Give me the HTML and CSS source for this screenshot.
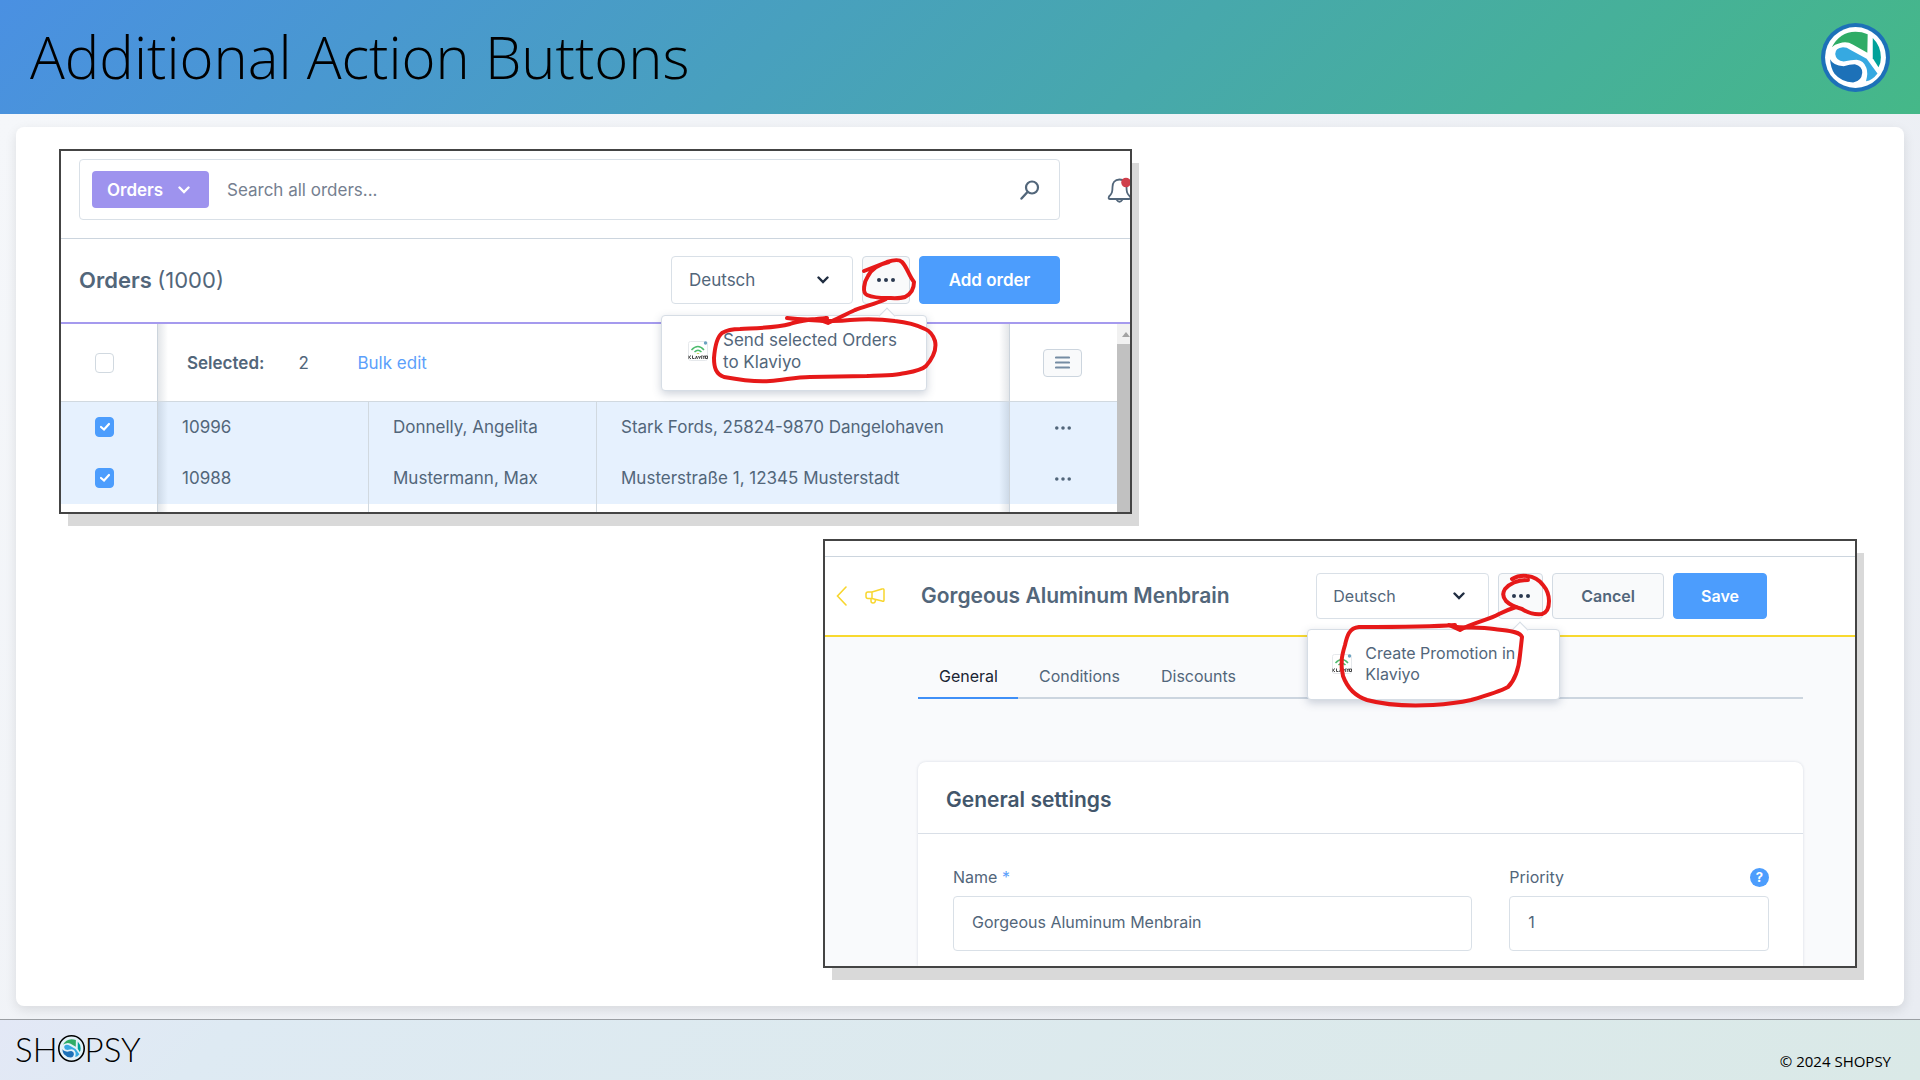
FILE: index.html
```html
<!DOCTYPE html>
<html lang="en">
<head>
<meta charset="utf-8">
<meta name="viewport" content="width=device-width, initial-scale=1">
<title>Additional Action Buttons</title>
<link rel="stylesheet" href="styles.css">
</head>
<body>
<svg class="defs" aria-hidden="true">
  <symbol id="mark" viewBox="0 0 204 204">
    <g transform="translate(-20 -18)">
      <path fill="#2fac66" d="M52 90Q75 45 122 44Q141 44 158 51L157 106L115 82Q95 70 75 78Q60 81 52 90Z"/>
      <path fill="#00a19a" d="M173 62Q197 85 197 120Q197 138 190 149L173 122Z"/>
      <path fill="#36a9e1" d="M62 110Q62 92 85 90Q97 90 105 96L155 124L187 167Q172 187 153 190Q160 165 154 150Q146 129 125 127Q110 127 87 132Q64 130 62 110Z"/>
      <path fill="#1d71b8" d="M47 125Q55 143 87 146Q105 140 120 140Q142 145 142 165Q140 190 115 194Q80 192 60 168Q48 150 47 125Z"/>
    </g>
  </symbol>
  <symbol id="chevron" viewBox="0 0 12 8">
    <path d="M1.500 1.500L6 6L10.500 1.500" fill="none" stroke="currentColor" stroke-width="2.400" stroke-linecap="round"/>
  </symbol>
  <symbol id="dots" viewBox="0 0 18 4">
    <circle cx="2" cy="2" r="2"/><circle cx="9" cy="2" r="2"/><circle cx="16" cy="2" r="2"/>
  </symbol>
  <symbol id="klaviyo" viewBox="0 0 20 20">
    <rect x=".5" y=".5" width="19" height="19" rx="2" fill="#fff" stroke="#e6e9ec"/>
    <path d="M3.500 9Q10 2 16 9M6.500 11Q10 7.500 13.500 11" fill="none" stroke="#4dbb6d" stroke-width="1.500"/>
    <path d="M8.500 13Q10 11 11.500 13Z" fill="#c5c93b"/>
    <circle cx="17.500" cy="2" r="1.700" fill="#6ba3c0"/>
    <path d="M0 14.500V18M3 14.500L1 16.200L3 18M4.500 14.500V17.500H6.500M7.500 18L8.500 15L9.500 18M10.500 15L11.500 17.500L12.500 15M13.700 14.500V18M14.800 14.500L15.800 16.200V18M16.800 14.500L15.800 16.200M17.500 15H19.500V17.500H17.500Z" fill="none" stroke="#333" stroke-width=".9"/>
  </symbol>
</svg>

<header class="title-bar">
  <h1>Additional Action Buttons</h1>
  <svg class="brand" viewBox="0 0 204 204" role="img" aria-label="Shopsy">
    <circle cx="102" cy="102" r="102" fill="#1d71b8"/>
    <circle cx="102" cy="102" r="90" fill="#fff"/>
    <use href="#mark"/>
  </svg>
</header>

<main class="stage">
  <div class="slide">
    <section class="shot shot-orders" aria-label="Orders">
      <div class="topbar">
        <div class="search">
          <button class="scope" type="button">Orders <svg class="chev"><use href="#chevron"/></svg></button>
          <input type="search" aria-label="Search" placeholder="Search all orders...">
          <svg class="lens" viewBox="0 0 20 20" aria-hidden="true"><circle cx="12" cy="7.500" r="6" fill="none" stroke="currentColor" stroke-width="2.200"/><path d="M7.500 12L1.500 18.500" stroke="currentColor" stroke-width="2.400" stroke-linecap="round"/></svg>
        </div>
        <div class="bell">
          <svg viewBox="0 0 26 26" aria-hidden="true"><path d="M12.500 2.500C7.500 2.500 5.500 6 5.500 10C5.500 15 5 16.500 2 19.500Q1 22 3 22H22Q24.500 22 23 19.500C20 16.500 19.500 15 19.500 10C19.500 6 17.500 2.500 12.500 2.500ZM9.500 22.500Q12.500 27 15.500 22.500" fill="none" stroke="#52667a" stroke-width="1.800"/><circle cx="19" cy="5.500" r="4.800" fill="#cf3f4b"/></svg>
        </div>
      </div>
      <div class="smartbar">
        <h2>Orders <span>(1000)</span></h2>
        <div class="actions">
          <div class="picker"><select aria-label="Language"><option>Deutsch</option></select><svg class="chev"><use href="#chevron"/></svg></div>
          <div class="more">
            <button class="btn btn-more" type="button" aria-label="More actions"><svg class="dots"><use href="#dots"/></svg></button>
            <div class="popover">
              <svg class="app"><use href="#klaviyo"/></svg>
              <a href="#orders">Send selected Orders to Klaviyo</a>
            </div>
            <svg class="ink" viewBox="700 250 250 140" aria-hidden="true">
              <path d="M864 271L887 262C893 260 899 259 902 262C907 267 909 276 914 282C914 289 911 294 905 297C899 299 892 298 887 298C880 298 872 297 867 295C862 293 864 282 868 276C872 268 880 264 889 262"/>
              <path d="M886 299C878 303 866 306 855 310C846 314 837 319 828 323L820 320"/>
              <path d="M787 318Q808 321 827 318C815 319 800 320 790 324C775 328 760 328 740 329C733 329 727 330 722 333C717 337 715 345 714 358C714 368 716 374 724 377C740 380 755 382 770 381C785 380 795 377 810 377L867 376C880 375 890 376 900 374C910 372 921 371 926 366C932 359 937 350 935 341C933 335 930 331 925 329C915 324 905 322 895 321C880 319 865 319 850 320C835 322 822 321 808 320"/>
            </svg>
          </div>
          <button class="btn btn-primary" type="button">Add order</button>
        </div>
      </div>
      <div class="grid-area">
        <table>
          <colgroup><col class="c-check"><col class="c-id"><col class="c-name"><col><col class="c-menu"></colgroup>
          <thead>
            <tr>
              <th class="check"><input type="checkbox" aria-label="Select all"></th>
              <th colspan="3" class="edge-left edge-right"><div class="bulk"><strong>Selected:</strong><span class="count">2</span><a href="#bulk">Bulk edit</a></div></th>
              <th class="menu"><button class="cols" type="button" aria-label="Columns"><svg viewBox="0 0 15 13"><path d="M1 1.500H14M1 6.500H14M1 11.500H14" stroke="currentColor" stroke-width="2.200" stroke-linecap="round"/></svg></button></th>
            </tr>
          </thead>
          <tbody>
            <tr class="picked">
              <td class="check"><input type="checkbox" checked aria-label="Order 10996"></td>
              <td class="edge-left line">10996</td><td class="line">Donnelly, Angelita</td><td class="edge-right">Stark Fords, 25824-9870 Dangelohaven</td>
              <td class="menu"><button class="row-menu" type="button" aria-label="Row actions"><svg class="dots"><use href="#dots"/></svg></button></td>
            </tr>
            <tr class="picked">
              <td class="check"><input type="checkbox" checked aria-label="Order 10988"></td>
              <td class="edge-left line">10988</td><td class="line">Mustermann, Max</td><td class="edge-right">Musterstraße 1, 12345 Musterstadt</td>
              <td class="menu"><button class="row-menu" type="button" aria-label="Row actions"><svg class="dots"><use href="#dots"/></svg></button></td>
            </tr>
            <tr class="rest"><td class="check"></td><td class="edge-left line"></td><td class="line"></td><td class="edge-right"></td><td class="menu"></td></tr>
          </tbody>
        </table>
        <div class="scrollbar" aria-hidden="true"><span class="up"></span><span class="thumb"></span></div>
      </div>
    </section>

    <section class="shot shot-promo" aria-label="Promotion">
      <div class="strip"></div>
      <div class="smartbar">
        <a class="back" href="#back" aria-label="Back"><svg viewBox="0 0 11 20"><path d="M10 1L1.500 10L10 19" fill="none" stroke="currentColor" stroke-width="1.600" stroke-linecap="round"/></svg></a>
        <svg class="horn" viewBox="0 0 20 16" aria-hidden="true"><path d="M7 4L17 1Q19 .5 19 2V12Q19 14 17 13L7 10.500H3Q1 10.500 1 8.500V6Q1 4 3 4ZM7 4V10.500M6 10.500V13Q6 15 8 15Q10.500 15 10.500 11.500" fill="none" stroke="currentColor" stroke-width="1.500"/></svg>
        <h2>Gorgeous Aluminum Menbrain</h2>
        <div class="actions">
          <div class="picker"><select aria-label="Language"><option>Deutsch</option></select><svg class="chev"><use href="#chevron"/></svg></div>
          <div class="more">
            <button class="btn btn-more" type="button" aria-label="More actions"><svg class="dots"><use href="#dots"/></svg></button>
            <div class="popover">
              <svg class="app"><use href="#klaviyo"/></svg>
              <a href="#promotion">Create Promotion in Klaviyo</a>
            </div>
            <svg class="ink" viewBox="1330 560 240 155" aria-hidden="true">
              <path d="M1513 579Q1520 575 1528 576Q1538 577 1544 585Q1550 592 1550 601Q1550 612 1543 614Q1532 615 1523 609Q1512 606 1507 601Q1502 595 1506 589Q1514 580 1529 580"/>
              <path d="M1517 607Q1508 610 1500 614C1490 620 1475 622 1461 630L1450 625"/>
              <path d="M1456 625C1430 627 1400 627 1360 627C1350 628 1348 636 1346 645C1343 655 1341 663 1344 676C1348 687 1356 696 1368 700C1390 706 1415 706 1434 705C1450 704 1463 702 1472 700C1486 696 1500 692 1509 687C1518 678 1520 666 1521 655L1523 637C1521 631 1508 631 1495 629C1482 627 1470 628 1458 627"/>
            </svg>
          </div>
          <button class="btn" type="button">Cancel</button>
          <button class="btn btn-primary" type="button">Save</button>
        </div>
      </div>
      <div class="detail">
        <nav class="tabs">
          <a class="tab active" href="#general">General</a>
          <a class="tab" href="#conditions">Conditions</a>
          <a class="tab" href="#discounts">Discounts</a>
        </nav>
        <div class="card">
          <h3>General settings</h3>
          <div class="fields">
            <div class="field">
              <label for="name">Name <span class="req">*</span></label>
              <input id="name" type="text" value="Gorgeous Aluminum Menbrain">
            </div>
            <div class="field">
              <div class="label-row"><label for="priority">Priority</label><button class="help" type="button" aria-label="Help">?</button></div>
              <input id="priority" type="text" value="1">
            </div>
          </div>
        </div>
      </div>
    </section>
  </div>
</main>

<footer class="foot">
  <div class="wordmark"><span>SH</span><svg viewBox="0 0 204 204" aria-hidden="true"><circle cx="102" cy="102" r="96" fill="#e2f1f8" stroke="#000" stroke-width="12"/><use href="#mark" x="8" y="8" width="188" height="188"/></svg><span>PSY</span></div>
  <p>© 2024 SHOPSY</p>
</footer>
</body>
</html>
```
FILE: styles.css
```css
* { box-sizing: border-box; }

body {
  margin: 0;
  min-height: 100vh;
  display: flex;
  flex-direction: column;
  font-family: "Open Sans", "Noto Sans", sans-serif;
  color: #000;
}

h1, h2, h3, p { margin: 0; }
a { color: inherit; text-decoration: none; }
button, input, select { font: inherit; color: inherit; }
.defs { display: none; }

/* Slide chrome */
.title-bar {
  height: 114px;
  padding: 0 30px;
  display: flex;
  align-items: center;
  justify-content: space-between;
  background: linear-gradient(135deg, #4a90e2, #45b888);
}
.title-bar h1 { font-size: 58px; line-height: 80px; font-weight: 300; }
.brand { width: 69px; height: 69px; }

.stage {
  flex: 1;
  display: flex;
  padding: 13px 16px;
  background: linear-gradient(135deg, #f5f7fa, #e9ecf2);
}
.slide {
  flex: 1;
  display: grid;
  grid-template-columns: 764fr 309fr 725fr;
  align-content: space-between;
  gap: 24px 0;
  padding: 22px 47px 38px 43px;
  border-radius: 8px;
  background: #fff;
  box-shadow: 0 4px 12px rgba(0, 0, 0, .1);
}

.foot {
  height: 61px;
  padding: 0 29px 0 15px;
  display: flex;
  align-items: center;
  justify-content: space-between;
  border-top: 1px solid #9a9ea3;
  background: linear-gradient(135deg, #e3e8f6, #deeaf3 12%, #dae9e7);
}
.foot p { align-self: flex-end; padding-bottom: 8px; font-size: 15px; line-height: 22px; }
.wordmark {
  display: flex;
  align-items: center;
  padding-bottom: 3px;
  font: 300 33px/40px Lato, sans-serif;
}
.wordmark svg { width: 27px; height: 27px; }

/* Screens */
.shot {
  display: flex;
  flex-direction: column;
  min-width: 0;
  overflow: hidden;
  border: 2px solid #444;
  background: #fff;
  box-shadow: 8px 13px 0 -1px #d9d9d9;
  font-family: Inter, sans-serif;
  color: #52667a;
}
.shot-orders { grid-column: 1 / 3; font-size: 17px; line-height: 22px; }
.shot-promo { grid-column: 2 / 4; font-size: 16px; line-height: 21px; }

.chev { width: 12px; height: 8px; }
.dots { width: 18px; height: 4px; display: block; fill: currentColor; }

.smartbar { display: flex; align-items: center; }
.smartbar h2 { font-size: 21px; line-height: 28px; font-weight: 600; white-space: nowrap; }
.smartbar h2 span { font-weight: 400; }
.actions { margin-left: auto; display: flex; gap: 9px; height: 48px; }

.picker { display: grid; align-items: center; width: 182px; }
.picker > * { grid-area: 1 / 1; }
.picker select {
  height: 100%;
  padding: 0 17px;
  appearance: none;
  border: 1px solid #d9e0e7;
  border-radius: 4px;
  background: #fff;
}
.picker .chev { justify-self: end; margin-right: 24px; color: #1f2c40; pointer-events: none; }

.btn {
  height: 100%;
  padding: 0 28px;
  border: 1px solid #d3dbe3;
  border-radius: 4px;
  background: #f9fafb;
  font-weight: 600;
}
.btn-more { width: 48px; padding: 0; display: grid; place-items: center; color: #2b3950; }
.btn-primary { border-color: #4c9dfd; background: #4c9dfd; color: #fff; }

.more { position: relative; }
.popover {
  position: absolute;
  z-index: 2;
  top: 59px;
  left: -201px;
  width: 266px;
  height: 76px;
  display: flex;
  gap: 15px;
  align-items: center;
  padding: 0 26px 3px;
  border: 1px solid #d6dde5;
  border-radius: 4px;
  background: #fff;
  box-shadow: 0 3px 8px rgba(60, 80, 110, .25);
}
.popover::before {
  content: "";
  position: absolute;
  top: -6px;
  right: 33px;
  width: 11px;
  height: 11px;
  border: solid #d6dde5;
  border-width: 1px 0 0 1px;
  background: #fff;
  transform: rotate(45deg);
}
.app { flex: none; width: 20px; height: 20px; }
.ink {
  position: absolute;
  z-index: 3;
  top: -6px;
  left: -162px;
  width: 250px;
  height: 140px;
  fill: none;
  stroke: #e61919;
  stroke-width: 4;
  stroke-linecap: round;
  stroke-linejoin: round;
  pointer-events: none;
}

/* Orders list */
.topbar {
  display: flex;
  gap: 47px;
  height: 88px;
  padding: 8px 0 18px 18px;
  border-bottom: 1px solid #ccd5de;
}
.search {
  flex: 1;
  display: flex;
  align-items: center;
  padding: 0 19px 0 12px;
  border: 1px solid #d9e0e7;
  border-radius: 4px;
}
.scope {
  display: flex;
  align-items: center;
  justify-content: space-between;
  width: 117px;
  height: 37px;
  padding: 0 19px 0 15px;
  border: 0;
  border-radius: 4px;
  background: #9e93ee;
  color: #fff;
  font-weight: 600;
}
.search input {
  flex: 1;
  min-width: 0;
  padding: 0 18px;
  border: 0;
  background: none;
}
.search input::placeholder { color: #758090; opacity: 1; }
.lens { width: 20px; height: 20px; }
.bell { width: 23px; display: flex; align-items: center; }
.bell svg { flex: none; width: 26px; height: 26px; }

.shot-orders .smartbar { height: 85px; padding: 0 70px 2px 18px; border-bottom: 2px solid #a59aee; }
.shot-orders .smartbar h2 { font-size: 22px; }
.shot-orders .btn-primary { width: 141px; }

.grid-area { display: flex; }
table { flex: 1; table-layout: fixed; border-collapse: separate; border-spacing: 0; }
.c-check { width: 96px; }
.c-id { width: 212px; }
.c-name { width: 228px; }
.c-menu { width: 107px; }
th { height: 78px; padding: 0; border-bottom: 1px solid #d1d9e0; font-weight: 400; text-align: left; }
td { height: 51px; padding: 0 0 2px 24px; white-space: nowrap; }
.picked td { background-color: #e6f1fe; }
.rest td { height: 8px; }
.line { border-right: 1px solid #d1d9e0; }
th.check { padding: 0; }
td.check { padding: 0 0 2px; }
.check input {
  display: block;
  width: 19px;
  height: 20px;
  margin: 0 auto 0 34px;
  appearance: none;
  border: 1px solid #d1d9e0;
  border-radius: 4px;
  background: #fff;
}
.check input:checked {
  border-color: #4c9dfd;
  background: #4c9dfd url("data:image/svg+xml,%3Csvg xmlns='http://www.w3.org/2000/svg' viewBox='0 0 12 10'%3E%3Cpath d='M2 5L5 7.500L10 2' fill='none' stroke='white' stroke-width='2.200' stroke-linecap='round'/%3E%3C/svg%3E") center / 12px 10px no-repeat;
}
.edge-left, .edge-right { background-repeat: no-repeat; background-size: 10px 100%; }
.edge-left {
  border-left: 1px solid #ccd4dc;
  background-image: linear-gradient(90deg, rgba(60, 80, 100, .14), transparent);
}
.edge-right {
  border-right: 1px solid #ccd4dc;
  background-position: right;
  background-image: linear-gradient(270deg, rgba(60, 80, 100, .14), transparent);
}
.edge-left.edge-right {
  background-position: left, right;
  background-image: linear-gradient(90deg, rgba(60, 80, 100, .14), transparent), linear-gradient(270deg, rgba(60, 80, 100, .14), transparent);
}
.edge-left.line { border-right: 1px solid #d1d9e0; }
.bulk { display: flex; gap: 34px; padding-left: 29px; }
.bulk strong { font-weight: 600; }
.count { width: 25px; }
.bulk a { color: #5c9ffb; }
.menu { padding: 0 0 0 33px; }
.cols {
  display: grid;
  place-items: center;
  width: 39px;
  height: 28px;
  padding: 0;
  border: 1px solid #ccd5de;
  border-radius: 4px;
  background: #f9fafb;
  color: #758ca3;
}
.cols svg { width: 15px; height: 13px; }
.row-menu { display: block; width: 39px; padding: 4px 12px; border: 0; background: none; }
.row-menu .dots { width: 16px; }
.scrollbar { width: 13px; display: flex; flex-direction: column; background: #f1f1f1; overflow: hidden; }
.up { align-self: flex-end; margin: 8px 0 7px; border: solid transparent; border-width: 0 4px 5px; border-bottom-color: #a3a3a3; }
.thumb { flex: 1; background: #c1c1c1; }

/* Promotion detail */
.strip { height: 16px; border-bottom: 1px solid #ccd5de; }
.shot-promo .smartbar { height: 80px; padding: 0 88px 0 11px; border-bottom: 2px solid #f8d92f; }
.shot-promo .actions { height: 46px; }
.shot-promo .picker { width: 173px; }
.shot-promo .picker select { padding: 0 16px; }
.shot-promo .btn-more { width: 45px; }
.shot-promo .btn-primary { width: 94px; padding: 0; }
.shot-promo .popover { top: 56px; left: -191px; width: 253px; height: 71px; padding: 0 24px 2px; gap: 13px; }
.shot-promo .ink { top: -13px; left: -169px; width: 240px; height: 155px; }
.back, .horn { color: #f8d62e; }
.back { display: flex; }
.back svg { width: 11px; height: 20px; }
.horn { width: 20px; height: 16px; margin: 0 36px 0 18px; }

.detail { padding: 0 52px 0 93px; background: #f9fafc; }
.tabs { display: flex; margin-bottom: 63px; border-bottom: 2px solid #ccd5df; }
.tab { margin-bottom: -2px; padding: 29px 20px 10px 21px; border-bottom: 2px solid transparent; }
.tab.active { border-color: #3f8ff7; color: #1a2433; }
.card { border-radius: 8px 8px 0 0; background: #fff; box-shadow: 0 0 3px rgba(60, 80, 110, .18); }
.card h3 {
  padding: 24px 28px 19px;
  border-bottom: 1px solid #d9dfe7;
  font-size: 21px;
  line-height: 28px;
  font-weight: 600;
  color: #42566b;
}
.fields { display: grid; grid-template-columns: 2fr 1fr; gap: 37px; padding: 31px 34px 15px 35px; }
.field { display: flex; flex-direction: column; gap: 7px; line-height: 24px; }
.label-row { display: flex; align-items: center; justify-content: space-between; }
.req { color: #5c9ffb; }
.field input {
  width: 100%;
  height: 55px;
  padding: 0 18px 3px;
  border: 1px solid #d9e0e7;
  border-radius: 4px;
  background: #fff;
}
.help {
  width: 19px;
  height: 19px;
  padding: 0;
  border: 0;
  border-radius: 50%;
  background: #4c9dfd;
  color: #fff;
  font-size: 13px;
  line-height: 19px;
  font-weight: 700;
}
```
